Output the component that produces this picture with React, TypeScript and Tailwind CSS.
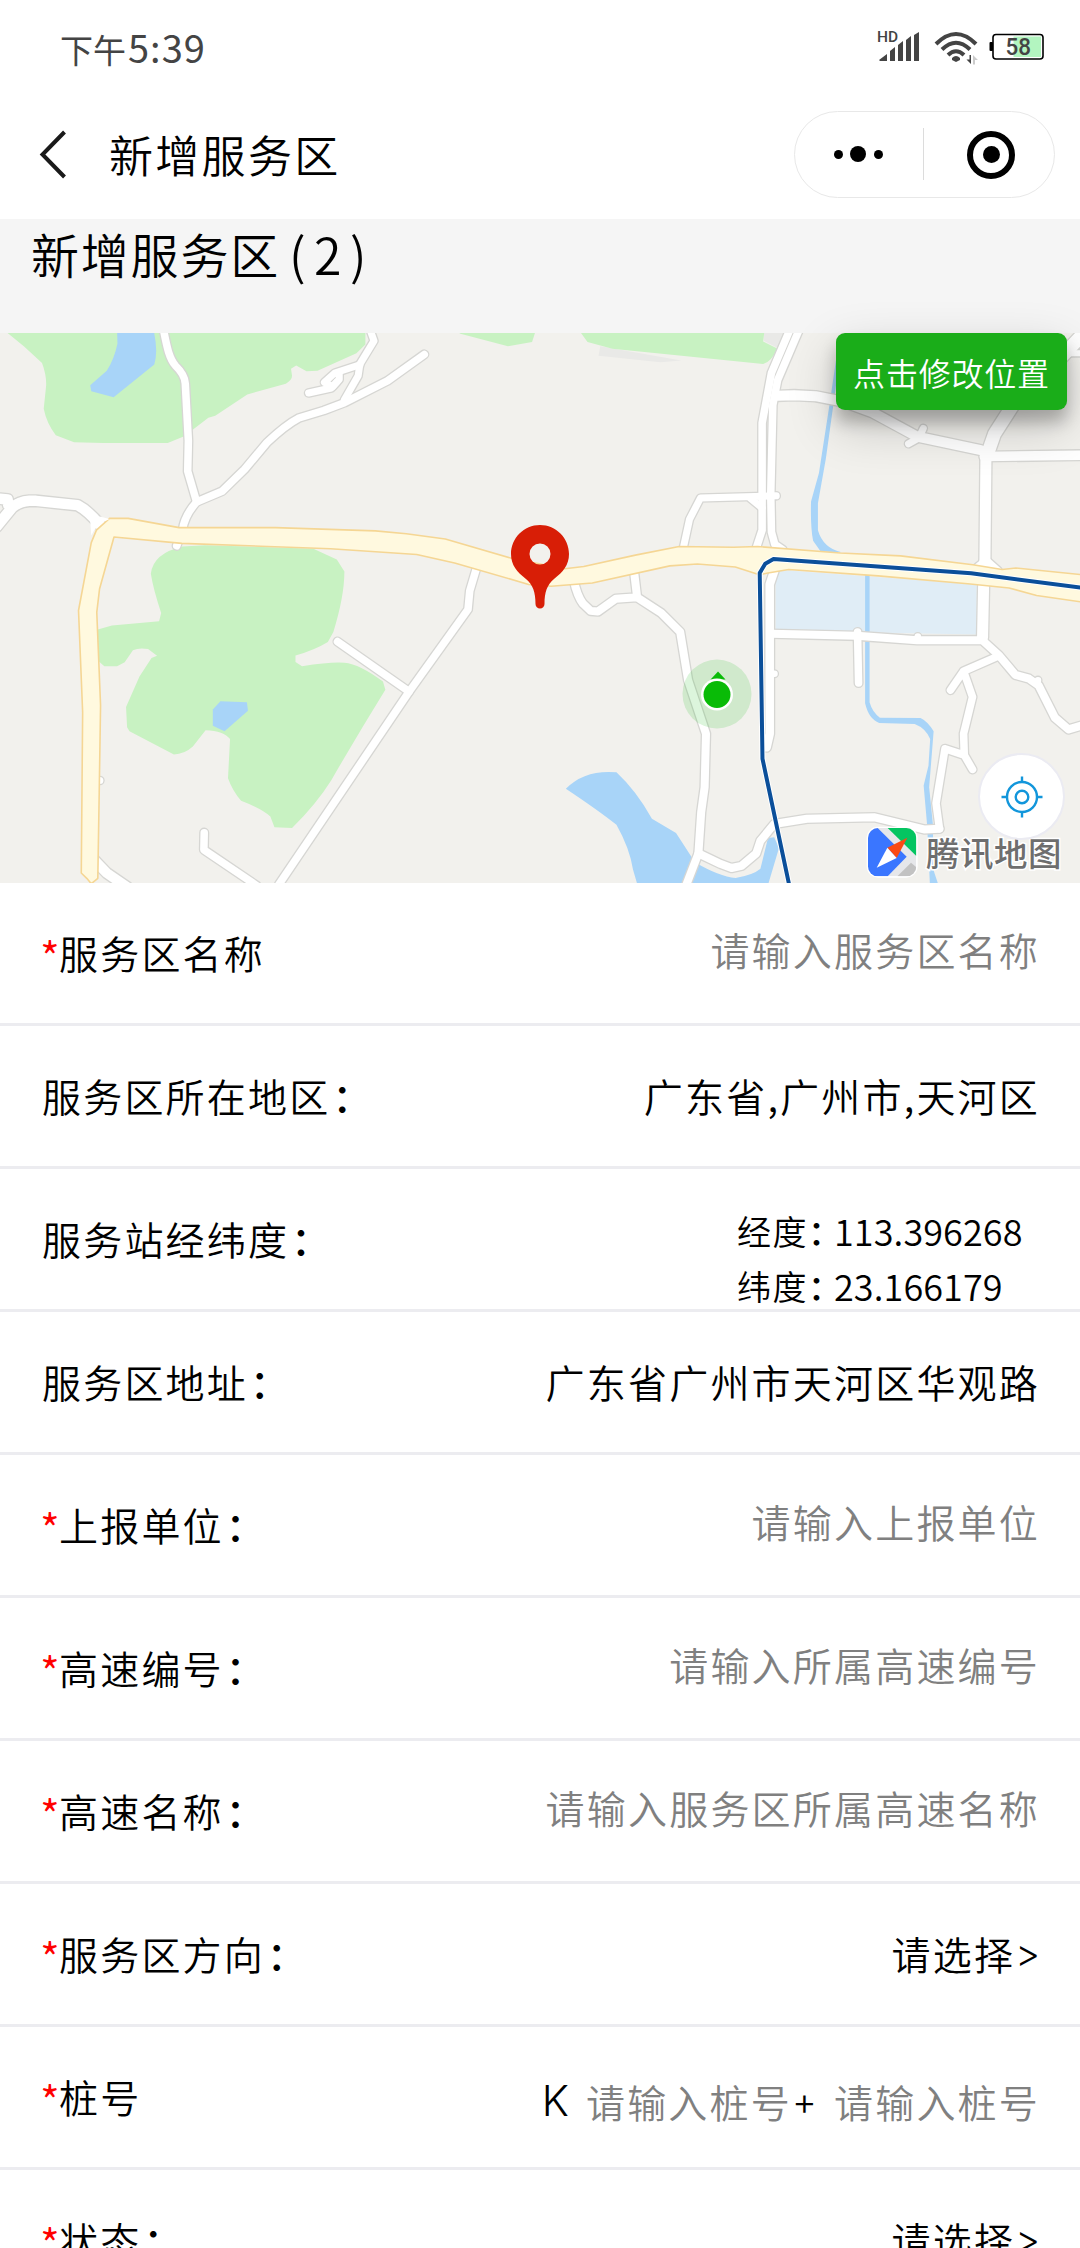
import type { ReactNode } from "react";

type Road = {
  d: string;
  width: number;
};

type Field = {
  label: string;
  required?: boolean;
  colon?: boolean;
  value?: string;
  placeholder?: string;
  content?: ReactNode;
};

const leftRoads: Road[] = [
  { d: "M475 0 C485 50 492 80 510 100 Q537 125 538 150 L547 310 L545 395 L571 481", width: 7.5 },
  { d: "M513 604 L530 560 Q535 520 571 481 L645 451 L710 390 L775 315 Q830 265 868 246 L940 225 L1000 203 L1125 142 L1232 68", width: 7.5 },
  { d: "M1075 0 L1086 30 L1045 95 L1040 128 L1000 195", width: 7 },
  { d: "M1045 97 L972 120 L942 146 L966 158 L985 138 L985 122", width: 7 },
  { d: "M896 176 L962 162 L978 145", width: 7 },
  { d: "M0 472 L22 474 L24 490 M-10 550 L35 497 Q55 480 85 478 L105 478 L225 490 Q255 505 290 545", width: 10.5 },
  { d: "M1384 665 L1364 730 L1359 782 L1188 1012 L810 1552", width: 7.5 },
  { d: "M980 872 L1188 1012", width: 7.5 },
  { d: "M593 1407 L592 1455 L745 1555", width: 7.5 },
  { d: "M270 1480 L310 1520 L370 1560", width: 10 },
  { d: "M280 1261 L290 1261", width: 7 },
];

const rightRoads: Road[] = [
  { d: "M725 0 L672 120 L645 260 L645 560 L628 610", width: 7.5 },
  { d: "M752 0 L690 140 L676 210 L670 460 L672 565 L682 600 L705 615", width: 7.5 },
  { d: "M690 184 L738 182 L800 185 L880 200 L965 230 L1095 298 L1280 336", width: 10 },
  { d: "M1070 318 L1100 302 L1113 275", width: 7 },
  { d: "M1300 345 L1320 290 L1380 200 L1500 90 L1568 20", width: 13 },
  { d: "M1290 354 L1568 350", width: 9.5 },
  { d: "M1295 340 L1292 640 L1288 720 L1285 860", width: 11 },
  { d: "M1262 672 L1295 645 L1330 675", width: 8 },
  { d: "M1520 65 L1580 65", width: 6 },
  { d: "M686 464 L466 470 L434 530 L415 615 M610 470 L645 498", width: 7 },
  { d: "M98 700 Q108 745 125 766 L147 786 L168 788 L220 752 L282 748 L273 675 M282 748 L352 792 L407 845 L430 980 L482 1130 L478 1280 L468 1350 L460 1465 L422 1560", width: 8 },
  { d: "M460 1465 L525 1495 L556 1506 L585 1500 L628 1465 L640 1430 L680 1383 L775 1368 L972 1364 L1115 1398 L1160 1396", width: 8 },
  { d: "M1160 1396 L1150 1325 L1176 1172 L1232 1190 L1256 1230 M1232 1190 L1230 1130 L1256 1027 L1230 955 L1192 1008 M1230 955 L1332 912", width: 7.5 },
  { d: "M680 675 L667 712 L667 1130 L658 1168", width: 8.5 },
  { d: "M672 850 L920 856 L1095 868 L1284 868 L1332 910 L1380 965 L1420 976 L1448 995 L1495 1085 L1535 1118 L1580 1105", width: 8 },
  { d: "M922 845 L925 988", width: 7.5 },
  { d: "M1097 858 L1097 858 M680 962 L681 962 M1446 980 L1446 980", width: 6.5 },
];

const fields: Field[] = [
  { label: "服务区名称", required: true, placeholder: "请输入服务区名称" },
  { label: "服务区所在地区", colon: true, value: "广东省,广州市,天河区" },
  { label: "服务站经纬度", colon: true, content: <Coordinates /> },
  { label: "服务区地址", colon: true, value: "广东省广州市天河区华观路" },
  { label: "上报单位", colon: true, required: true, placeholder: "请输入上报单位" },
  { label: "高速编号", colon: true, required: true, placeholder: "请输入所属高速编号" },
  { label: "高速名称", colon: true, required: true, placeholder: "请输入服务区所属高速名称" },
  { label: "服务区方向", colon: true, required: true, content: <Picker /> },
  { label: "桩号", required: true, content: <StakeInputs /> },
  { label: "状态", colon: true, required: true, content: <Picker /> },
];

function StatusBar() {
  return (
    <div className="flex h-[96px] shrink-0 items-center justify-between pr-[36px] pl-[60px] text-[#444]">
      <div className="mb-[4px] flex items-baseline text-[33px] font-normal">
        下午<span className="ml-[2px] text-[38px] tracking-[1px]">5:39</span>
      </div>
      <svg className="mb-[2px]" width="168" height="36" viewBox="877 29 168 36" fill="#444">
        <text x="878" y="42" fontSize="15.5" fontWeight="500" fontFamily="Roboto, sans-serif">
          HD
        </text>
        <path d="M880 60 L888 54 V61 H881Z M891 51 L896 47 V61 H891Z M899 45 L904 41 V61 H899Z M907 40 L912 36 V61 H907Z M915 35 L920 32 V61 H915Z" />
        <g fill="none" stroke="#444" strokeWidth="4">
          <path d="M937 44 Q957 24 977 44" />
          <path d="M943 49.5 Q957 36 971 49.5" />
          <path d="M949 55 Q957 47.5 965 55" />
        </g>
        <path d="M953 58 Q957 54 961 58 V60 L957 62 L953 60Z" />
        <path d="M972 55 V64 L967.500 59.500 H970.500 V55Z" />
        <path d="M974 55 L979 60 H976 V64.500 H974Z" fill="#ccc" />
        <rect x="994" y="34.500" width="50" height="24.500" rx="3" fill="#fff" stroke="#000" strokeWidth="1.600" />
        <rect x="990.500" y="42" width="3.500" height="9" rx="1" fill="#000" />
        <rect x="1014.500" y="36.500" width="27.500" height="20.500" fill="#b3f5c0" />
        <text x="1006.500" y="55" fontSize="24" fontWeight="500" textLength="25.500" lengthAdjust="spacingAndGlyphs" fontFamily="Roboto, sans-serif">
          58
        </text>
      </svg>
    </div>
  );
}

function NavBar() {
  return (
    <div className="flex h-[123px] shrink-0 items-center pr-[25px] pb-[7px] pl-[38px]">
      <svg width="30" height="50" viewBox="0 0 30 50" fill="none" stroke="#1a1a1a" strokeWidth="4">
        <path d="M26.500 3 L4.500 25.500 L26.500 48" />
      </svg>
      <h1 className="ml-[41px] text-[44px] leading-none tracking-[2.3px]">新增服务区</h1>
      <div className="ml-auto flex h-[87px] w-[261px] items-center rounded-full border border-[#e8e8e8]">
        <div className="flex flex-1 items-center justify-center gap-[7.500px] pr-[2px]">
          <span className="h-[9px] w-[9px] rounded-full bg-black" />
          <span className="h-[16px] w-[16px] rounded-full bg-black" />
          <span className="h-[9px] w-[9px] rounded-full bg-black" />
        </div>
        <div className="h-[52px] w-px bg-[#dcdcdc]" />
        <div className="flex flex-1 justify-center pl-[4px]">
          <div className="mt-px flex h-[48px] w-[48px] items-center justify-center rounded-full border-[6px] border-black">
            <span className="h-[17px] w-[17px] rounded-full bg-black" />
          </div>
        </div>
      </div>
    </div>
  );
}

function Roads({ roads }: { roads: Road[] }) {
  return (
    <g fill="none" strokeLinecap="round" strokeLinejoin="round">
      {roads.map((road) => (
        <path key={road.d} d={road.d} stroke="#d6d6d3" strokeWidth={road.width + 2.6} vectorEffect="non-scaling-stroke" />
      ))}
      {roads.map((road) => (
        <path key={road.d} d={road.d} stroke="#fff" strokeWidth={road.width} vectorEffect="non-scaling-stroke" />
      ))}
    </g>
  );
}

function MapTiles() {
  return (
    <svg className="block h-full w-full" viewBox="0 8 3136 1540" preserveAspectRatio="none">
      <rect width="3136" height="1560" fill="#f2f1ed" />
      <g fill="#c8f2c2">
        <path d="M12 0 L70 46 L122 92 Q135 125 134 155 L127 220 Q135 260 162 294 L215 314 L300 316 L487 316 L535 297 L605 245 L625 240 L718 180 L830 150 Q848 140 848 128 L845 108 L860 99 L890 115 L922 114 L1035 65 L1061 40 V0Z" />
        <path d="M1320 0 L1337 10 L1475 45 L1545 33 L1556 0Z" />
        <path d="M595 602 L910 612 L978 642 L1000 676 Q1000 745 968 845 L952 873 Q915 895 858 911 V929 L877 941 Q960 928 1000 931 Q1045 935 1112 984 L1119 1007 Q1040 1130 962 1260 Q920 1325 848 1394 L797 1392 L785 1362 Q760 1340 700 1318 Q675 1290 662 1255 L668 1145 Q650 1122 597 1120 L560 1166 Q535 1188 505 1188 L376 1123 L369 1112 L366 1055 L405 970 L440 918 L456 912 L430 893 Q405 888 386 896 L362 930 L340 941 H303 L284 925 V838 L325 827 L462 815 L468 792 Q445 725 438 682 Q445 625 530 606Z" />
      </g>
      <g fill="#a8d4f8">
        <path d="M340 0 L341 38 Q332 80 310 114 L262 154 L265 171 L330 188 L448 96 Q460 60 446 0Z" />
        <path d="M618 1062 L640 1039 L717 1042 L720 1066 L652 1123 L618 1108Z" />
      </g>
      <Roads roads={leftRoads} />

      <g transform="translate(1568 0)">
        <path d="M175 45 L170 72 L350 90 L410 85 M650 0 V30 L690 50 L715 8Z" fill="#e9e9e7" />
        <path d="M113 0 L138 33 L210 52 L648 95 Q670 90 690 52 L648 32 L652 0Z" fill="#c8f2c2" />
        <path d="M684 670 L1268 712 V852 L684 842Z" fill="#e0edf6" />
        <path d="M75 1284 Q130 1230 222 1238 Q280 1290 325 1368 L395 1408 L450 1490 Q520 1530 568 1534 Q620 1525 640 1508 L662 1422 L680 1420 L694 1450 L660 1560 H285 L270 1510 Q260 1450 222 1385 Q170 1345 75 1284Z" fill="#a8d4f8" />
        <path d="M860 80 L842 200 L810 400 L787 480 Q785 550 793 590 L815 620 L876 622 Q822 610 807 560 V485 L830 360 L856 180 L870 80Z" fill="#a8d4f8" />
        <path d="M944 670 V1045 Q955 1090 985 1100 L1088 1103 Q1120 1115 1133 1145 L1128 1220 L1114 1275 L1124 1385 L1132 1548 H1155 L1142 1510 L1141 1385 L1130 1280 L1143 1123 Q1125 1095 1105 1086 L987 1085 Q965 1070 957 1042 V670Z" fill="#a8d4f8" />
        <Roads roads={rightRoads} />
      </g>

      {/* 主干道 */}
      <g stroke="#f5d694" strokeWidth="1.600">
        <path
          d="M318 527 L372 527 L520 553 L800 553 L1090 562 L1180 570 L1293 585 L1490 640 L1640 668 L1695 662 L1845 630 L1972 606 L2130 608 L2200 606 L2440 624 L2615 632 L2825 657 L2910 670 L2950 666 L3146 685 V762 L3010 743 L2930 722 L2810 710 L2550 688 L2290 670 L2230 680 L2205 685 L2135 663 L2025 655 L1945 660 L1720 708 L1600 717 L1535 712 L1320 652 L1210 628 L960 612 L528 597 L331 579 L289 725 L281 790 L292 1050 L288 1300 L284 1535 L265 1550 L252 1535 L236 1520 L240 1070 L228 785 L265 595 L280 560Z"
          fill="#fff9df"
          strokeLinejoin="round"
          vectorEffect="non-scaling-stroke"
        />
      </g>
      <path d="M265 575 Q277 545 318 529 L290 522 L262 535Z" fill="#fff" />

      {/* 地铁线 */}
      <path
        d="M2293 1560 L2214 1200 L2206 680 L2222 654 L2246 641 L2820 681 L3146 722"
        fill="none"
        stroke="#fff"
        strokeWidth="6"
        strokeLinejoin="round"
        vectorEffect="non-scaling-stroke"
      />
      <path
        d="M2293 1560 L2214 1200 L2206 680 L2222 654 L2246 641 L2820 681 L3146 722"
        fill="none"
        stroke="#0b4f9a"
        strokeWidth="4"
        strokeLinejoin="round"
        vectorEffect="non-scaling-stroke"
      />
    </svg>
  );
}

function MapPin() {
  return (
    <svg className="absolute top-[192px] left-[511px]" width="58" height="84" viewBox="0 0 58 84">
      <path
        d="M29 0 C45 0 58 13 58 29 C58 40 52 47 43 54 C36 60 33.500 67 33.500 79 A4.500 4.500 0 0 1 24.500 79 C24.500 67 22 60 15 54 C6 47 0 40 0 29 C0 13 13 0 29 0Z M29 18.500 A10.500 10.500 0 1 0 29 39.500 A10.500 10.500 0 1 0 29 18.500Z"
        fill="#d81e06"
        fillRule="evenodd"
      />
    </svg>
  );
}

function UserMarker() {
  return (
    <svg className="absolute top-[326px] left-[682px]" width="70" height="70" viewBox="0 0 70 70">
      <circle cx="35" cy="35" r="34.500" fill="#09bb07" fillOpacity="0.140" />
      <path d="M36 12.500 L43.500 20.500 H28.500Z" fill="#09bb07" />
      <circle cx="35" cy="35.500" r="16" fill="#fff" />
      <circle cx="35" cy="35.500" r="13.500" fill="#09bb07" />
    </svg>
  );
}

function MapLogo() {
  return (
    <div className="absolute top-[493px] left-[866px] flex items-center">
      <svg width="52" height="52" viewBox="78 288 156 156">
        <clipPath id="logo">
          <rect x="84" y="294" width="145" height="145" rx="30" />
        </clipPath>
        <rect x="80" y="290" width="153" height="153" rx="34" fill="#fff" />
        <g clipPath="url(#logo)">
          <rect x="84" y="294" width="145" height="145" fill="#e6e7ea" />
          <path d="M84 294 H113 L200 380 L143 439 H84Z" fill="#3a76ff" />
          <path d="M143 294 H229 V378Z" fill="#04c561" />
          <path d="M172 439 L213 398 L229 412 V439Z" fill="#c2c2c2" />
          <path d="M202 323 L142 353 L170 384Z" fill="#fa4a14" />
          <path d="M142 353 L170 384 L110 413Z" fill="#fff" />
        </g>
      </svg>
      <span className="ml-[8px] text-[33.500px] leading-[50px] font-medium tracking-[0.500px] text-[#6e6e6e] [paint-order:stroke] [-webkit-text-stroke:3px_#fff]">
        腾讯地图
      </span>
    </div>
  );
}

function LocateButton() {
  return (
    <button className="absolute top-[420px] right-[15px] h-[87px] w-[87px] rounded-full border-2 border-[#ebebf2] bg-white">
      <svg className="m-auto" width="42" height="42" viewBox="0 0 42 42" fill="none" stroke="#1296db" strokeWidth="2.400">
        <circle cx="21" cy="21" r="15" />
        <circle cx="21" cy="21" r="6.300" />
        <path d="M21 0.500 V6 M21 36 V41.500 M0.500 21 H6 M36 21 H41.500" />
      </svg>
    </button>
  );
}

function MapPanel() {
  return (
    <div className="relative h-[550px] shrink-0">
      <MapTiles />
      <UserMarker />
      <MapPin />
      <MapLogo />
      <LocateButton />
      <button className="absolute top-0 right-[13px] h-[77px] w-[231px] rounded-[9px] bg-[#1aad19] text-[32px] tracking-[0.800px] text-white shadow-[0_12px_16px_0_rgba(0,0,0,0.24),0_17px_50px_0_rgba(0,0,0,0.19)]">
        点击修改位置
      </button>
    </div>
  );
}

function Coordinates() {
  return (
    <div className="mt-[39px] w-[303px] text-[34px] leading-[55px] tracking-[1.500px]">
      <div className="flex">
        经度<span className="w-[26px] font-medium">：</span>
        <span className="text-[36px] tracking-[0.100px]">113.396268</span>
      </div>
      <div className="flex">
        纬度<span className="w-[26px] font-medium">：</span>
        <span className="text-[36px] tracking-[0.100px]">23.166179</span>
      </div>
    </div>
  );
}

function Picker() {
  return (
    <div className="flex">
      请选择<span className="font-['Inter'] text-[38px] font-light tracking-normal">&gt;</span>
    </div>
  );
}

function StakeInputs() {
  return (
    <div className="mt-[10px] flex items-center">
      <span className="font-['Inter'] text-[42px] font-light tracking-normal">K</span>
      <span className="ml-[17px] text-[#808080]">请输入桩号</span>
      <span className="w-[42px] font-['Inter'] text-[38px] tracking-normal">+</span>
      <span className="text-[#808080]">请输入桩号</span>
    </div>
  );
}

function FieldRow({ field }: { field: Field }) {
  return (
    <div className="flex h-[143px] shrink-0 items-center justify-between border-b-[3px] border-[#ececf0] pr-[40px] pb-[2px] pl-[42px] text-[39px] leading-[56px] tracking-[2.200px]">
      <div className="flex">
        {field.required && (
          <span className="mt-[3px] -mb-[3px] -ml-[2px] w-[19px] text-[43px] tracking-normal text-[#f00]">*</span>
        )}
        {field.label}
        {field.colon && <span className="ml-[2px] font-medium">：</span>}
      </div>
      {field.content}
      {field.value && <div>{field.value}</div>}
      {field.placeholder && <div className="mb-[6px] text-[#808080]">{field.placeholder}</div>}
    </div>
  );
}

function App() {
  return (
    <div
      lang="zh-CN"
      className="flex h-[2248px] w-[1080px] flex-col overflow-hidden bg-white font-['Noto_Sans_CJK_SC',sans-serif] font-[350] whitespace-nowrap text-black"
    >
      <StatusBar />
      <NavBar />
      <div className="h-[114px] shrink-0 bg-[#f5f5f5] pt-[3px] pl-[31px]">
        <h2 className="flex text-[48px] leading-[62px] tracking-[1.800px]">
          新增服务区
          <span className="ml-[9px] text-[50px] tracking-[8.500px]">(2)</span>
        </h2>
      </div>
      <MapPanel />
      <div className="flex shrink-0 flex-col">
        {fields.map((field) => (
          <FieldRow key={field.label} field={field} />
        ))}
      </div>
    </div>
  );
}

export default App;
